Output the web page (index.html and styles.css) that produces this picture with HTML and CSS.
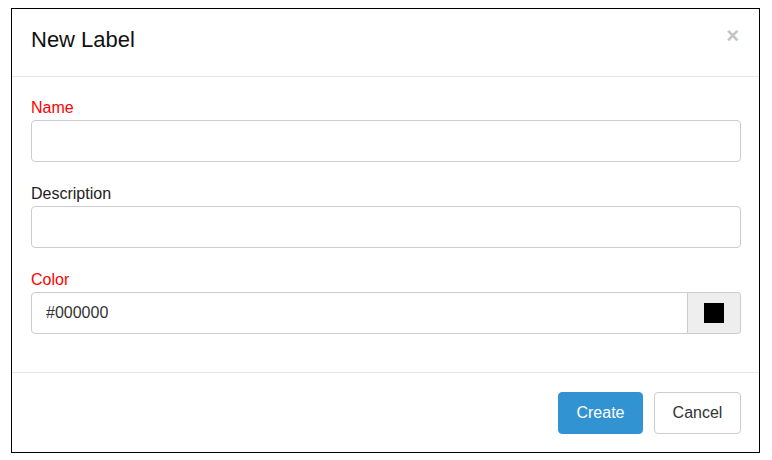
FILE: index.html
```html
<!DOCTYPE html>
<html>
<head>
<meta charset="utf-8">
<link rel="stylesheet" href="styles.css">
</head>
<body>
<div class="modal">
  <div class="modal-header">
    <h4 class="modal-title">New Label</h4>
    <button class="close" type="button">×</button>
  </div>
  <div class="modal-body">
    <div class="form-group">
      <label class="label required">Name</label>
      <input class="input" type="text">
    </div>
    <div class="form-group">
      <label class="label">Description</label>
      <input class="input" type="text">
    </div>
    <div class="form-group">
      <label class="label required">Color</label>
      <div class="input-group">
        <input class="input input-joined" type="text" value="#000000">
        <span class="addon"><span class="swatch"></span></span>
      </div>
    </div>
  </div>
  <div class="modal-footer">
    <button class="btn btn-primary" type="button">Create</button>
    <button class="btn btn-default" type="button">Cancel</button>
  </div>
</div>
</body>
</html>
```
FILE: styles.css
```css
html, body {
  margin: 0;
  padding: 0;
  background: #fff;
}
body {
  font-family: "Liberation Sans", Arial, sans-serif;
  color: #222;
}
.modal {
  box-sizing: border-box;
  width: 749px;
  height: 445px;
  margin: 8px 0 0 11px;
  border: 1px solid #000;
  background: #fff;
  display: flex;
  flex-direction: column;
}
.modal-header {
  display: flex;
  justify-content: space-between;
  align-items: flex-start;
  padding: 16px 18px 21px 19px;
  border-bottom: 1px solid #e5e5e5;
}
.modal-title {
  margin: 0;
  font-size: 22px;
  font-weight: normal;
  line-height: 30px;
  color: #111;
}
.close {
  border: 0;
  background: none;
  padding: 0;
  margin: 3px 2px 0 0;
  font-family: "Liberation Sans", Arial, sans-serif;
  font-size: 22px;
  font-weight: bold;
  line-height: 16px;
  color: #c4c4c4;
  cursor: pointer;
}
.modal-body {
  flex: 1;
  padding: 20px 18px 16px 19px;
}
.form-group {
  margin-bottom: 21px;
}
.label {
  display: block;
  font-size: 16px;
  line-height: 22px;
  margin-bottom: 1px;
  color: #222;
}
.label.required {
  color: #ff0000;
}
.input {
  box-sizing: border-box;
  display: block;
  width: 100%;
  height: 42px;
  padding: 0 14px;
  border: 1px solid #cccccc;
  border-radius: 4px;
  font-family: "Liberation Sans", Arial, sans-serif;
  font-size: 16px;
  color: #333;
  background: #fff;
  outline: none;
}
.input-group {
  display: flex;
}
.input-joined {
  flex: 1;
  border-top-right-radius: 0;
  border-bottom-right-radius: 0;
}
.addon {
  box-sizing: border-box;
  width: 53px;
  height: 42px;
  display: flex;
  align-items: center;
  justify-content: center;
  background: #eeeeee;
  border: 1px solid #cccccc;
  border-left: 0;
  border-radius: 0 4px 4px 0;
}
.swatch {
  width: 20px;
  height: 20px;
  background: #000;
}
.modal-footer {
  display: flex;
  justify-content: flex-end;
  gap: 11px;
  padding: 19px 18px 18px 19px;
  border-top: 1px solid #e5e5e5;
}
.btn {
  box-sizing: border-box;
  height: 42px;
  border-radius: 4px;
  font-family: "Liberation Sans", Arial, sans-serif;
  font-size: 16px;
  padding: 0 17px;
  cursor: pointer;
}
.btn-primary {
  width: 85px;
  background: #3293d3;
  border: 1px solid #3293d3;
  color: #fff;
}
.btn-default {
  width: 87px;
  background: #fff;
  border: 1px solid #cccccc;
  color: #333;
}
```
